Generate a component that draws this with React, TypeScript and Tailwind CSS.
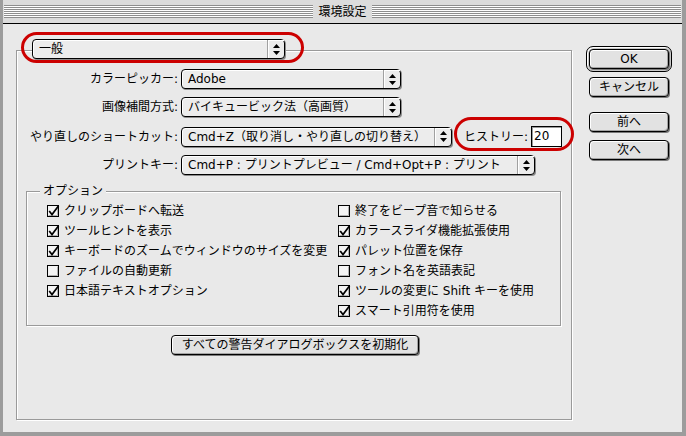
import type { ReactNode } from 'react';

const FONT = "font-['DejaVu_Sans','Noto_Sans_CJK_JP',sans-serif]";

function Arrows() {
  return (
    <svg width="7" height="11" viewBox="0 0 7 11">
      <path d="M3.5 0 L7 4 L0 4 Z" fill="#000" />
      <path d="M0 7 L7 7 L3.5 11 Z" fill="#000" />
    </svg>
  );
}

function Popup({ text, w }: { text: string; w: string }) {
  return (
    <div
      className={`${w} h-[20px] flex shrink-0 rounded-[4px] border border-black bg-[#ececec] shadow-[1px_1px_0_#8c8c8c,inset_1px_1px_0_#fff]`}
    >
      <div className="flex-1 pl-[6px] leading-[18px] whitespace-nowrap overflow-hidden">{text}</div>
      <div className="w-[17px] flex items-center justify-center border-l border-[#a0a0a0] shadow-[inset_1px_1px_0_#fff]">
        <Arrows />
      </div>
    </div>
  );
}

function Btn({ children, w }: { children: ReactNode; w: string }) {
  return (
    <div
      className={`${w} h-[20px] flex items-center justify-center rounded-[4px] border border-black bg-[#e2e2e2] leading-none shadow-[inset_1px_1px_0_#fff,inset_-1px_-1px_0_#a4a4a4,1px_1px_0_#7a7a7a]`}
    >
      {children}
    </div>
  );
}

function Check({ on, label }: { on: boolean; label: string }) {
  return (
    <div className="h-[20px] flex items-center gap-[4px] whitespace-nowrap">
      <svg width="13" height="13" viewBox="0 0 13 13" className="shrink-0">
        <rect x="0.5" y="0.5" width="11" height="11" fill="#f4f4f4" stroke="#000" />
        <path d="M1.5 10.5 H10.5 V1.5" fill="none" stroke="#b0b0b0" />
        {on && <path d="M2.2 6 L5 9.6 L11.6 0.8" fill="none" stroke="#000" strokeWidth="1.7" />}
      </svg>
      <span className="leading-[20px]">{label}</span>
    </div>
  );
}

function Row({ label, children }: { label: string; children: ReactNode }) {
  return (
    <div className="flex items-center">
      <div className="w-[161px] text-right whitespace-nowrap leading-[20px]">{label}</div>
      <div className="ml-[3px] flex items-center">{children}</div>
    </div>
  );
}

const left = [
  { on: true, label: 'クリップボードへ転送' },
  { on: true, label: 'ツールヒントを表示' },
  { on: true, label: 'キーボードのズームでウィンドウのサイズを変更' },
  { on: false, label: 'ファイルの自動更新' },
  { on: true, label: '日本語テキストオプション' },
];

const right = [
  { on: false, label: '終了をビープ音で知らせる' },
  { on: true, label: 'カラースライダ機能拡張使用' },
  { on: true, label: 'パレット位置を保存' },
  { on: false, label: 'フォント名を英語表記' },
  { on: true, label: 'ツールの変更に Shift キーを使用' },
  { on: true, label: 'スマート引用符を使用' },
];

export default function App() {
  return (
    <div
      className={`${FONT} relative w-[686px] h-[436px] bg-[#9c9c9c] pl-[3px] pr-[4px] pb-[4px] flex flex-col text-[12px] text-black overflow-hidden`}
    >
      {/* title bar */}
      <div className="h-[24px] shrink-0 bg-[#dcdcdc] border-b border-black flex items-center px-[1px]">
        <div className="flex-1 h-[13px] flex items-center justify-center bg-[repeating-linear-gradient(to_bottom,#8e8e8e_0px,#8e8e8e_1px,#ffffff_1px,#ffffff_2px)]">
          <span className="bg-[#dcdcdc] px-[5px] leading-[16px]">環境設定</span>
        </div>
      </div>

      {/* body */}
      <div className="flex-1 bg-[#e9e9e9] flex items-start pl-[13px] pt-[22px]">
        {/* main group */}
        <div className="mt-[4px] w-[556px] h-[370px] border border-[#9a9a9a] shadow-[inset_1px_1px_0_#fff,1px_1px_0_#fff] flex flex-col">
          <div className="-mt-[12px] ml-[15px]">
            <Popup text="一般" w="w-[253px]" />
          </div>

          <div className="mt-[10px]">
            <Row label="カラーピッカー:">
              <Popup text="Adobe" w="w-[220px]" />
            </Row>
          </div>
          <div className="mt-[8px]">
            <Row label="画像補間方式:">
              <Popup text="バイキュービック法（高画質）" w="w-[220px]" />
            </Row>
          </div>
          <div className="mt-[9px]">
            <Row label="やり直しのショートカット:">
              <Popup text="Cmd+Z（取り消し・やり直しの切り替え）" w="w-[271px]" />
              <span className="ml-[12px] w-[64px] whitespace-nowrap">ヒストリー:</span>
              <div className="ml-[3px] w-[31px] h-[21px] bg-white border border-black shadow-[inset_1px_1px_0_#9a9a9a] pl-[2px] leading-[19px]">
                20
              </div>
            </Row>
          </div>
          <div className="mt-[8px]">
            <Row label="プリントキー:">
              <Popup text="Cmd+P : プリントプレビュー / Cmd+Opt+P : プリント" w="w-[354px]" />
            </Row>
          </div>

          {/* options group */}
          <div className="mt-[16px] ml-[9px] w-[535px] h-[135px] shrink-0 border border-[#9a9a9a] shadow-[inset_1px_1px_0_#fff,1px_1px_0_#fff] flex flex-col">
            <div className="-mt-[8px] ml-[13px] self-start px-[3px] h-[14px] leading-[14px] bg-[#e9e9e9]">オプション</div>
            <div className="mt-[3px] ml-[20px] flex">
              <div className="w-[291px] flex flex-col">
                {left.map((c) => (
                  <Check key={c.label} on={c.on} label={c.label} />
                ))}
              </div>
              <div className="flex flex-col">
                {right.map((c) => (
                  <Check key={c.label} on={c.on} label={c.label} />
                ))}
              </div>
            </div>
          </div>

          <div className="mt-[9px] ml-[154px]">
            <Btn w="w-[248px]">すべての警告ダイアログボックスを初期化</Btn>
          </div>
        </div>

        {/* buttons */}
        <div className="ml-[14px] w-[86px] flex flex-col items-center">
          <div className="w-[86px] h-[26px] rounded-[7px] border border-black bg-[#c8c8c8] p-[2px] shadow-[inset_1px_1px_0_#fff]">
            <Btn w="w-[80px]">OK</Btn>
          </div>
          <div className="mt-[5px]">
            <Btn w="w-[80px]">キャンセル</Btn>
          </div>
          <div className="mt-[15px]">
            <Btn w="w-[80px]">前へ</Btn>
          </div>
          <div className="mt-[8px]">
            <Btn w="w-[80px]">次へ</Btn>
          </div>
        </div>
      </div>

      {/* red annotations */}
      <div className="absolute left-[21px] top-[32px] w-[283px] h-[31px] rounded-[16px] border-[3px] border-[#cc0000]" />
      <div className="absolute left-[454px] top-[117px] w-[120px] h-[34px] rounded-[17px] border-[3px] border-[#cc0000]" />
    </div>
  );
}
